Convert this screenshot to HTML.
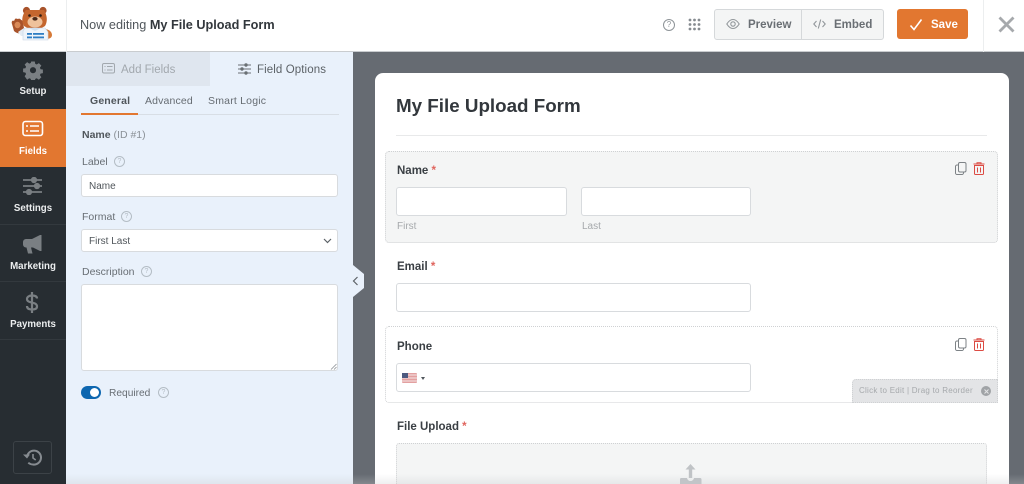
<!DOCTYPE html>
<html><head><meta charset="utf-8"><style>
*{box-sizing:border-box}
html,body{margin:0;padding:0;width:1024px;height:484px;overflow:hidden;background:#fff;font-family:"Liberation Sans",sans-serif;color:#444}
#p{position:relative;width:1024px;height:484px;overflow:hidden;filter:blur(.35px)}
.a{position:absolute;white-space:nowrap}
.in{position:absolute;background:#fff;border:1px solid #d8dbde;border-radius:3px}
.nav{position:absolute;left:0;width:66px;height:58px;border-bottom:1px solid #33393e;color:#eceeef;font-size:9.700px;font-weight:bold;text-align:center}
.nav span{position:absolute;left:0;right:0}
.q{position:absolute;width:11px;height:11px;border:1px solid #b4bdc5;border-radius:50%;color:#b4bdc5;font-size:7px;line-height:9px;text-align:center}
.lab{font-size:11.500px;font-weight:bold;color:#3a3f44}
.st{color:#e0655e}
.sl{font-size:10px;color:#a6a9ac}
.sel{position:absolute;left:385px;width:613px;background:#fff;border:1px dotted #cfd1d3;border-radius:4px}
</style></head><body><div id="p">

<!-- top bar -->
<div class="a" style="left:0;top:0;width:1024px;height:52px;background:#fff;border-bottom:1px solid #c9cccf"></div>
<div class="a" style="left:66px;top:0;width:1px;height:52px;background:#eceeef"></div>
<div class="a" style="left:983px;top:0;width:1px;height:52px;background:#eceeef"></div>
<svg class="a" style="left:0;top:0" width="66" height="51" viewBox="0 0 66 51">
<path d="M44 29c5 0 8 3 8 6s-3 4-6 4z" fill="#d67a38"/>
<path d="M12 24c-1-3 1-4 2-3l1-2c1-1 2 0 3 0 1-1 3 0 3 1 1 0 2 1 2 3l1 5-2 5c-3 1-6 0-8-2z" fill="#a8532b"/>
<ellipse cx="17.500" cy="25" rx="3" ry="3.200" fill="#d98a58"/>
<path d="M18 32l6-4 4 1-2 7-5 0z" fill="#e4ecf4"/>
<circle cx="26.500" cy="10.500" r="3.600" fill="#a8532b"/><circle cx="43" cy="10.500" r="3.600" fill="#a8532b"/>
<path d="M26 10h18c3 5 4 11 1 16l-5 3H29l-5-3c-3-5-2-11 2-16z" fill="#c4662e"/>
<ellipse cx="35" cy="22" rx="7.500" ry="5.500" fill="#efc29b"/>
<ellipse cx="35" cy="18.800" rx="2.600" ry="1.800" fill="#4a2a1a"/>
<circle cx="29.500" cy="15.500" r="1.300" fill="#2a1a12"/><circle cx="40.500" cy="15.500" r="1.300" fill="#2a1a12"/>
<path d="M25 28h20l3 4v8H23v-9z" fill="#eef4fa" stroke="#c7d6e4" stroke-width=".6"/>
<path d="M29 28l6 3 6-3" fill="#cfe0f0"/>
<rect x="27" y="33" width="5" height="1.800" fill="#2f7ec4"/><rect x="33" y="33" width="11" height="1.800" fill="#2f7ec4"/>
<rect x="27" y="36.500" width="5" height="1.800" fill="#2f7ec4"/><rect x="33" y="36.500" width="11" height="1.800" fill="#2f7ec4"/>
</svg>
<div class="a" style="left:80px;top:17px;font-size:12.700px;line-height:16px;color:#50565b">Now editing <b style="color:#32373c;font-weight:bold">My File Upload Form</b></div>
<div class="q" style="left:663px;top:19px;width:12px;height:12px;color:#8e9498;border-color:#8e9498;font-size:8px;line-height:10px">?</div>
<svg class="a" style="left:688px;top:18px" width="13" height="13" fill="#868b90"><circle cx="2" cy="2" r="1.400"/><circle cx="6.500" cy="2" r="1.400"/><circle cx="11" cy="2" r="1.400"/><circle cx="2" cy="6.500" r="1.400"/><circle cx="6.500" cy="6.500" r="1.400"/><circle cx="11" cy="6.500" r="1.400"/><circle cx="2" cy="11" r="1.400"/><circle cx="6.500" cy="11" r="1.400"/><circle cx="11" cy="11" r="1.400"/></svg>
<div class="a" style="left:714px;top:9px;width:170px;height:31px;background:#f4f5f5;border:1px solid #d5d8da;border-radius:3px"></div>
<div class="a" style="left:801px;top:10px;width:1px;height:29px;background:#d5d8da"></div>
<svg class="a" style="left:726px;top:18px" width="14" height="12" viewBox="0 0 14 12" fill="none" stroke="#92979b" stroke-width="1.100"><path d="M.8 6C3 2.500 5 1.500 7 1.500S11 2.500 13.200 6C11 9.500 9 10.500 7 10.500S3 9.500.8 6z"/><circle cx="7" cy="6" r="2.200"/></svg>
<div class="a" style="left:748px;top:18px;font-size:11.500px;line-height:15px;font-weight:bold;color:#6a6f74">Preview</div>
<svg class="a" style="left:813px;top:18px" width="13" height="12" viewBox="0 0 13 12" fill="none" stroke="#92979b" stroke-width="1.100"><path d="M3.500 3L.8 6l2.700 3M9.500 3l2.700 3-2.700 3M7.700 1.500L5.300 10.500"/></svg>
<div class="a" style="left:834px;top:18px;font-size:11.500px;line-height:15px;font-weight:bold;color:#6a6f74">Embed</div>
<div class="a" style="left:897px;top:9px;width:71px;height:30px;background:#e27730;border-radius:3px"></div>
<svg class="a" style="left:909px;top:18px" width="14" height="13" fill="none" stroke="#fff" stroke-width="1.600"><path d="M1.500 7.500l3.500 4 7.500-10"/></svg>
<div class="a" style="left:931px;top:18px;font-size:11.500px;line-height:15px;font-weight:bold;color:#fff">Save</div>
<svg class="a" style="left:998px;top:16px" width="17" height="17" stroke="#a6a9ac" stroke-width="2.800"><path d="M1.500 1.500l14 14M15.500 1.500l-14 14"/></svg>

<!-- sidebar -->
<div class="a" style="left:0;top:52px;width:66px;height:432px;background:#272d32"></div>
<div class="nav" style="top:52px;height:57px;border:0"><span style="top:33px;line-height:14px">Setup</span></div>
<svg class="a" style="left:23px;top:60px" width="20" height="20" viewBox="0 0 20 20"><path fill="#7a7f83" fill-rule="evenodd" d="M8 .5h4l.5 2.700 1.700.7 2.300-1.600 2.800 2.800-1.600 2.300.7 1.700 2.600.4v4l-2.600.5-.7 1.700 1.600 2.300-2.800 2.800-2.300-1.600-1.700.7-.5 2.600H8l-.5-2.600-1.700-.7-2.300 1.600L.7 16.900l1.600-2.300-.7-1.700L-1 12.400v-4l2.600-.4.7-1.700L.7 4 3.500 1.300l2.300 1.600 1.700-.7zM10 6.800a3.400 3.400 0 100 6.800 3.400 3.400 0 000-6.800z" transform="translate(1 1) scale(.9)"/></svg>
<div class="nav" style="top:109px;height:58px;background:#e27730;border:0;color:#fff"><span style="top:36px;line-height:14px;font-weight:bold">Fields</span></div>
<svg class="a" style="left:22px;top:120px" width="22" height="17" fill="none" stroke="#fff" stroke-width="1.600"><rect x="1" y="1.500" width="19.500" height="14" rx="2.500"/><path d="M8 6h9M8 11h9M4 6h2M4 11h2"/></svg>
<div class="nav" style="top:167px;height:58px"><span style="top:35px;line-height:14px">Settings</span></div>
<svg class="a" style="left:23px;top:177px" width="20" height="18" stroke="#7a7f83" stroke-width="1.700" fill="#7a7f83"><path d="M0 3h19M0 9h19M0 15h19"/><circle cx="11" cy="3" r="2.300"/><circle cx="14" cy="9" r="2.300"/><circle cx="6" cy="15" r="2.300"/></svg>
<div class="nav" style="top:225px;height:57px"><span style="top:35px;line-height:14px">Marketing</span></div>
<svg class="a" style="left:23px;top:235px" width="19" height="19" fill="#7a7f83"><path d="M17 0h1.500v16H17l-7-3.500H8l1.500 6H5L3.500 12.500H3A3 3 0 010 9.500V7a3 3 0 013-3h6z"/></svg>
<div class="nav" style="top:282px;height:58px"><span style="top:36px;line-height:14px">Payments</span></div>
<svg class="a" style="left:25px;top:292px" width="14" height="21" fill="none" stroke="#7a7f83" stroke-width="2.200"><path d="M12 6.500C12 4.500 10 3.500 7 3.500S2 5 2 7c0 5 10 2 10 7.500 0 2-2 3-5 3s-5-1-5-3.500M7 0v21"/></svg>
<div class="a" style="left:13px;top:441px;width:39px;height:33px;border:1px solid #3c4247;border-radius:3px"></div>
<svg class="a" style="left:23px;top:449px" width="19" height="17" viewBox="0 0 19 17" fill="none" stroke="#868b90" stroke-width="2"><path d="M4 8.500A7 7 0 1110 15.500c-2 0-3.500-.7-4.700-1.800"/><path d="M10 5v4l2.700 2" stroke-width="1.600"/><path d="M0 5.500l4 4 3-4z" fill="#868b90" stroke="none"/></svg>

<!-- panel -->
<div class="a" style="left:66px;top:52px;width:287px;height:432px;background:#e9f1fb"></div>
<div class="a" style="left:66px;top:52px;width:144px;height:34px;background:#dfe6ef"></div>
<svg class="a" style="left:102px;top:63px" width="13" height="11" fill="none" stroke="#a2a8ae"><rect x=".5" y=".5" width="12" height="9.500" rx="1.500"/><path d="M5 3.500h5.500M5 7h5.500M2.500 3.500h1M2.500 7h1"/></svg>
<div class="a" style="left:121px;top:63px;font-size:11.500px;line-height:14px;color:#a2a8ae">Add Fields</div>
<svg class="a" style="left:238px;top:63px" width="13" height="12" stroke="#6a7075" fill="#6a7075"><path d="M0 2h13M0 6h13M0 10h13" stroke-width="1"/><circle cx="8" cy="2" r="1.200"/><circle cx="4" cy="6" r="1.200"/><circle cx="8" cy="10" r="1.200"/></svg>
<div class="a" style="left:257px;top:63px;font-size:11.500px;line-height:14px;color:#5c6267;letter-spacing:.1px">Field Options</div>
<div class="a" style="left:90px;top:95px;font-size:10.500px;line-height:13px;font-weight:bold;color:#50565b;letter-spacing:.15px">General</div>
<div class="a" style="left:145px;top:95px;font-size:10.500px;line-height:13px;color:#666c72;letter-spacing:.15px">Advanced</div>
<div class="a" style="left:208px;top:95px;font-size:10.500px;line-height:13px;color:#666c72;letter-spacing:.2px">Smart Logic</div>
<div class="a" style="left:81px;top:114px;width:258px;height:1px;background:#d8dee5"></div>
<div class="a" style="left:81px;top:113px;width:57px;height:2px;background:#e27730"></div>

<div class="a" style="left:82px;top:129px;font-size:10.500px;line-height:13px;color:#8b9197"><b style="color:#50565b">Name</b> (ID #1)</div>
<div class="a" style="left:82px;top:156px;font-size:10.500px;line-height:13px;color:#686e74">Label</div>
<div class="q" style="left:114px;top:156px">?</div>
<div class="in" style="left:81px;top:174px;width:257px;height:23px;font-size:10px;line-height:22px;padding:1px 0 0 7px;color:#50565b">Name</div>
<div class="a" style="left:82px;top:211px;font-size:10.500px;line-height:13px;color:#686e74">Format</div>
<div class="q" style="left:121px;top:211px">?</div>
<div class="in" style="left:81px;top:229px;width:257px;height:23px;font-size:10px;line-height:22px;padding:1px 0 0 7px;color:#50565b">First Last</div>
<svg class="a" style="left:323px;top:238px" width="9" height="6" fill="none" stroke="#5c6267" stroke-width="1.200"><path d="M1 1l3.500 3.500L8 1"/></svg>
<div class="a" style="left:82px;top:266px;font-size:10.500px;line-height:13px;color:#686e74">Description</div>
<div class="q" style="left:141px;top:266px">?</div>
<div class="in" style="left:81px;top:284px;width:257px;height:87px"></div>
<svg class="a" style="left:330px;top:363px" width="7" height="7" stroke="#8b9197" stroke-width=".8"><path d="M1 6.500L6.500 1M4 6.500L6.500 4"/></svg>
<div class="a" style="left:81px;top:386px;width:20px;height:13px;background:#0e67b0;border-radius:7px"></div>
<div class="a" style="left:90px;top:388px;width:9px;height:9px;background:#fff;border-radius:50%"></div>
<div class="a" style="left:109px;top:387px;font-size:10.200px;line-height:13px;color:#686e74">Required</div>
<div class="q" style="left:158px;top:387px">?</div>

<!-- canvas -->
<div class="a" style="left:353px;top:52px;width:671px;height:432px;background:#666b72"></div>
<div class="a" style="left:353px;top:265px;width:11px;height:32px;background:#e9f1fb;clip-path:polygon(0 0,100% 28%,100% 72%,0 100%)"></div>
<svg class="a" style="left:352px;top:276px" width="7" height="10" fill="none" stroke="#5c6267" stroke-width="1.200"><path d="M5.500 1L1.500 5l4 4"/></svg>
<div class="a" style="left:375px;top:73px;width:634px;height:411px;background:#fff;border-radius:8px 8px 0 0"></div>
<div class="a" style="left:396px;top:94px;font-size:18.800px;line-height:23px;font-weight:bold;color:#32373c">My File Upload Form</div>
<div class="a" style="left:396px;top:135px;width:591px;height:1px;background:#e8e9ea"></div>

<div class="sel" style="top:151px;height:92px;background:#f4f5f5"></div>
<div class="a lab" style="left:397px;top:164px;line-height:14px">Name <span class="st">*</span></div>
<div class="in" style="left:396px;top:187px;width:171px;height:29px"></div>
<div class="in" style="left:581px;top:187px;width:170px;height:29px"></div>
<div class="a sl" style="left:397px;top:220px;line-height:13px">First</div>
<div class="a sl" style="left:582px;top:220px;line-height:13px">Last</div>

<div class="a lab" style="left:397px;top:260px;line-height:14px">Email <span class="st">*</span></div>
<div class="in" style="left:396px;top:283px;width:355px;height:29px"></div>

<div class="sel" style="top:326px;height:77px"></div>
<div class="a lab" style="left:397px;top:340px;line-height:14px">Phone</div>
<div class="in" style="left:396px;top:363px;width:355px;height:29px"></div>
<svg class="a" style="left:402px;top:373px" width="15" height="10"><rect width="15" height="10" rx="1" fill="#e3a0a0"/><path d="M0 2h15M0 5h15M0 8h15" stroke="#f6e6e6"/><rect width="6" height="5" fill="#4d5a80"/></svg>
<svg class="a" style="left:421px;top:377px" width="4" height="3" fill="#50565b"><path d="M0 0h4L2 3z"/></svg>

<div class="a" style="left:852px;top:379px;width:146px;height:24px;background:#e3e4e6;border:1px dotted #cfd1d3;border-radius:4px 0 0 0"></div>
<div class="a" style="left:859px;top:385px;font-size:8px;line-height:12px;color:#a6a9ac;letter-spacing:.25px">Click to Edit | Drag to Reorder</div>
<div class="a" style="left:981px;top:386px;width:10px;height:10px;background:#a0a3a6;border-radius:50%"></div>
<svg class="a" style="left:983.500px;top:388.500px" width="5" height="5" stroke="#e3e4e6" stroke-width="1"><path d="M.5.5l4 4M4.500.5l-4 4"/></svg>

<div class="a lab" style="left:397px;top:420px;line-height:14px">File Upload <span class="st">*</span></div>
<div class="a" style="left:396px;top:443px;width:591px;height:50px;background:#f4f5f5;border:1px dotted #cfd1d3;border-radius:3px"></div>
<svg class="a" style="left:680px;top:463px" width="22" height="21" fill="#c0c3c6"><path d="M10.500 1l5 5.500h-3.300V15h-3.400V6.500H5.500z"/><path d="M1 15h6c.5 2 2 3 3.500 3s3-1 3.500-3h6c1 0 1.500.5 1.500 1.500V21H0v-4.500C0 15.500.500 15 1 15z"/></svg>

<!-- field icons -->
<svg class="a" style="left:955px;top:162px" width="12" height="13" fill="none" stroke="#7d8286" stroke-width="1"><rect x="3.500" y=".5" width="7.500" height="9.500" rx="1.500" fill="#f4f5f5"/><path d="M3 3H2a1.500 1.500 0 00-1.500 1.500v6.500A1.500 1.500 0 002 12.500h5A1.500 1.500 0 008.500 11v-.5"/></svg>
<svg class="a" style="left:973px;top:162px" width="12" height="13" fill="none" stroke="#dc4b43" stroke-width="1"><path d="M1.500 3.500h9v8a1 1 0 01-1 1h-7a1 1 0 01-1-1zM.5 2h11M4 2V.7h4V2M4.500 5.500v5M7.500 5.500v5"/></svg>
<svg class="a" style="left:955px;top:338px" width="12" height="13" fill="none" stroke="#7d8286" stroke-width="1"><rect x="3.500" y=".5" width="7.500" height="9.500" rx="1.500" fill="#fff"/><path d="M3 3H2a1.500 1.500 0 00-1.500 1.500v6.500A1.500 1.500 0 002 12.500h5A1.500 1.500 0 008.500 11v-.5"/></svg>
<svg class="a" style="left:973px;top:338px" width="12" height="13" fill="none" stroke="#dc4b43" stroke-width="1"><path d="M1.500 3.500h9v8a1 1 0 01-1 1h-7a1 1 0 01-1-1zM.5 2h11M4 2V.7h4V2M4.500 5.500v5M7.500 5.500v5"/></svg>

<div class="a" style="left:66px;top:474px;width:958px;height:10px;background:linear-gradient(rgba(200,202,205,0),rgba(200,202,205,.3))"></div>
</div></body></html>
